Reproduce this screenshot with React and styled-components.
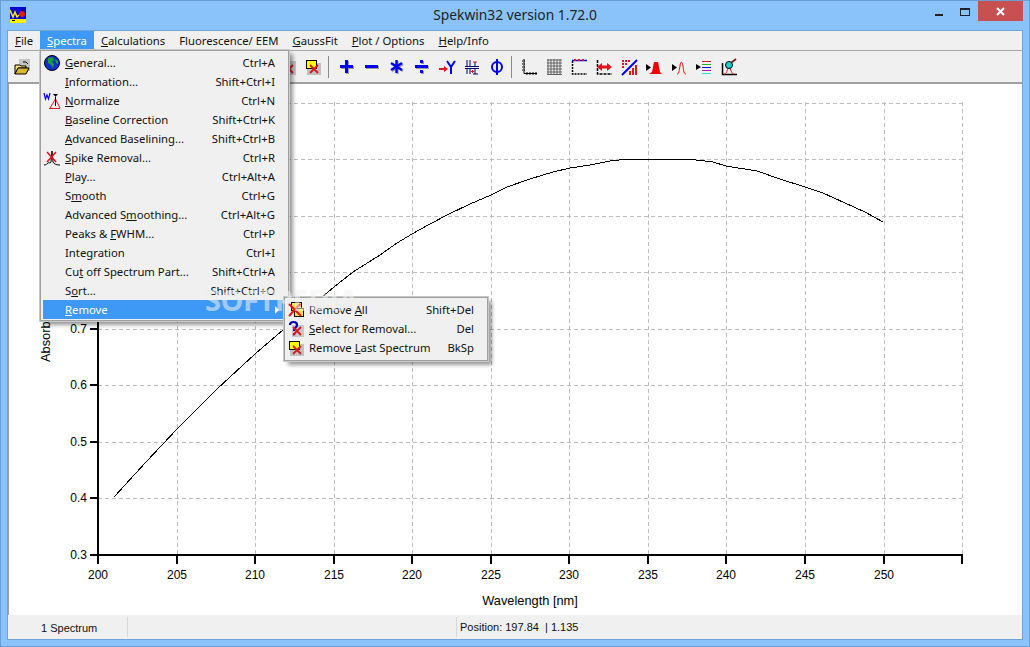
import React from "react";
import styled, { createGlobalStyle } from "styled-components";

const UI_FONT = `"Noto Sans", "Liberation Sans", sans-serif`;
const PLOT_FONT = `"Liberation Sans", Arial, sans-serif`;

const GlobalStyle = createGlobalStyle`
  html, body {
    margin: 0;
    padding: 0;
    background: #8ac3f9;
  }
  u {
    text-underline-offset: 1px;
  }
`;

const menuBarItems = [
  "_File",
  "_Spectra",
  "_Calculations",
  "Fluorescence/ EEM",
  "_GaussFit",
  "_Plot / Options",
  "_Help/Info"
];

const spectraMenu = [
  { label: "_General...", keys: "Ctrl+A", icon: "globe" },
  { label: "_Information...", keys: "Shift+Ctrl+I" },
  { label: "_Normalize", keys: "Ctrl+N", icon: "normalize" },
  { label: "_Baseline Correction", keys: "Shift+Ctrl+K" },
  { label: "_Advanced Baselining...", keys: "Shift+Ctrl+B" },
  { label: "_Spike Removal...", keys: "Ctrl+R", icon: "spike" },
  { label: "_Play...", keys: "Ctrl+Alt+A" },
  { label: "S_mooth", keys: "Ctrl+G" },
  { label: "Advanced S_moothing...", keys: "Ctrl+Alt+G" },
  { label: "Peaks & _FWHM...", keys: "Ctrl+P" },
  { label: "Inte_gration", keys: "Ctrl+I" },
  { label: "Cu_t off Spectrum Part...", keys: "Shift+Ctrl+A" },
  { label: "S_ort...", keys: "Shift+Ctrl+O" },
  { label: "_Remove", submenu: true }
];

const removeMenu = [
  { label: "Remove _All", keys: "Shift+Del", icon: "removeAll" },
  { label: "_Select for Removal...", keys: "Del", icon: "removeSelect" },
  { label: "Remove _Last Spectrum", keys: "BkSp", icon: "removeLast" }
];

// pixel positions read off the plot, 1 nm steps are too fine to matter here
const curve = [
  [114, 497], [146, 462], [178, 428], [217, 389], [255, 354], [283, 330],
  [322, 297], [334, 287], [353, 272], [380, 255], [397, 243], [412, 234],
  [430, 224], [447, 215], [470, 204], [491, 195], [507, 187], [530, 179],
  [553, 172], [570, 168], [590, 165], [610, 161], [628, 159], [688, 159],
  [713, 162], [726, 166], [757, 171], [780, 179], [805, 187], [823, 193],
  [845, 203], [865, 212], [883, 222]
];

const xTicks = [200, 205, 210, 215, 220, 225, 230, 235, 240, 245, 250, 255];
const yTicks = [0.3, 0.4, 0.5, 0.6, 0.7, 0.8, 0.9, 1.0, 1.1];
const xPos = nm => Math.round(98 + (nm - 200) * 15.71);
const yPos = a => Math.round(555 - (a - 0.3) * 565.5);

const AccessLabel = ({ text }) => {
  if (!text.includes("_")) return text;
  const [before, after] = text.split("_");
  return (
    <>
      {before}
      <u>{after[0]}</u>
      {after.slice(1)}
    </>
  );
};

const Shadowed = ({ children }) => (
  <>
    <g fill="#9a9a9a" stroke="#9a9a9a" transform="translate(1 1)">
      {children}
    </g>
    <g fill="#0000ee" stroke="#0000ee">
      {children}
    </g>
  </>
);

const RedX = () => (
  <path d="M5 6l8 8M13 6l-8 8" stroke="#d8181c" strokeWidth="1.8" fill="none" />
);

const icons = {
  open: (
    <>
      <rect x="5" y="0" width="11" height="12" fill="#c4c4c4" />
      <path d="M1 6h5l1 1h5v2H4l-3 6z" fill="#f8e860" stroke="#000" />
      <path d="M1 15l3-6h11l-3 6z" fill="#d8b830" stroke="#000" />
      <path d="M9 3h3l2 2" fill="none" stroke="#000" />
    </>
  ),
  xPart: (
    <>
      <rect x="0" y="2" width="16" height="14" fill="#c4c4c4" />
      <RedX />
    </>
  ),
  last: (
    <>
      <rect x="2" y="4" width="14" height="12" fill="#c0c0c0" />
      <rect x="1.5" y="1.5" width="10" height="8" fill="#ffff00" stroke="#000" />
      <RedX />
    </>
  ),
  plus: (
    <Shadowed>
      <rect x="1" y="6" width="13" height="3" strokeWidth="0" />
      <rect x="6" y="1" width="3" height="13" strokeWidth="0" />
    </Shadowed>
  ),
  minus: (
    <Shadowed>
      <rect x="1" y="6" width="13" height="3" strokeWidth="0" />
    </Shadowed>
  ),
  times: (
    <Shadowed>
      <path d="M7.5 1v13M2 4l11 7M13 4L2 11" strokeWidth="2.4" fill="none" />
    </Shadowed>
  ),
  divide: (
    <Shadowed>
      <rect x="1" y="6" width="13" height="3" strokeWidth="0" />
      <rect x="6" y="1" width="3" height="3" strokeWidth="0" />
      <rect x="6" y="11" width="3" height="3" strokeWidth="0" />
    </Shadowed>
  ),
  fork: (
    <>
      <path d="M0 10h6" stroke="#e8141c" strokeWidth="2" />
      <path d="M5 7l4 3-4 3z" fill="#e8141c" />
      <path d="M8 2l4 6 4-6M12 8v7" stroke="#0000ee" strokeWidth="2" fill="none" />
    </>
  ),
  levels: (
    <>
      <path d="M3 1v6M6 1v6M1 7.5h14M11 3v4" stroke="#000066" strokeWidth="1" fill="none" />
      <path d="M9 3h4" stroke="#e8141c" />
      <path d="M1 9.5h14M3 10v5M6 10v5M11 10v5M9 15h5" stroke="#000066" fill="none" />
      <path d="M7 12.5h3M8.5 11v3" stroke="#e8141c" />
    </>
  ),
  phi: (
    <>
      <circle cx="8" cy="8" r="5" fill="none" stroke="#0000ee" strokeWidth="2" />
      <path d="M8 0v16" stroke="#0000ee" strokeWidth="2" />
    </>
  ),
  axes: (
    <>
      <path d="M3 0v14.5H16" stroke="#000" fill="none" />
      <path d="M1 2h4M1 5h4M1 8h4M1 11h4M6 13v3M9 13v3M12 13v3M15 13v3" stroke="#000" strokeDasharray="1 1" />
    </>
  ),
  grid: (
    <g stroke="#606060">
      <path d="M1 1h15M1 4h15M1 7h15M1 10h15M1 13h15M1 15.5h15" />
      <path d="M2 0v16M5 0v16M8 0v16M11 0v16M14 0v16" />
    </g>
  ),
  frame: (
    <>
      <path d="M1.5 2v13H16" stroke="#000" fill="none" strokeWidth="1.5" strokeDasharray="2 1" />
      <path d="M1 1.5h15" stroke="#0000ee" strokeWidth="1.5" />
      <path d="M3 1h2M7 1h2M11 1h2" stroke="#e8141c" strokeWidth="2" />
    </>
  ),
  stretch: (
    <>
      <path d="M1.5 1v14H16" stroke="#000" fill="none" strokeWidth="1.5" strokeDasharray="3 1" />
      <path d="M3 8h11" stroke="#e8141c" strokeWidth="3" />
      <path d="M6 4L1 8l5 4zM11 4l5 4-5 4z" fill="#e8141c" />
    </>
  ),
  diagonal: (
    <>
      <path
        d="M1 1h2v2H1zM4 1h2v2H4zM7 1h2v2H7zM1 4h2v2H1zM4 4h2v2H4zM1 7h2v2H1zM8 12h2v4H8zM11 9h2v7h-2zM14 6h2v10h-2z"
        fill="#e8141c"
      />
      <path d="M1 16L16 1" stroke="#0000ee" strokeWidth="2" />
    </>
  ),
  peakFill: (
    <>
      <path d="M0 5l5 3.5L0 12z" fill="#000" />
      <path d="M3 15l3-2 2-10h4l2 10 2 2z" fill="#f00000" />
    </>
  ),
  peakLine: (
    <>
      <path d="M1 5l5 3.5L1 12z" fill="#000" />
      <path d="M6 15c2 0 2-3 3-8 .5-5 2-5 3 0 .5 5 1 8 3 8" fill="none" stroke="#f00000" />
    </>
  ),
  legend: (
    <>
      <path d="M0 5l5 3-5 3z" fill="#000" />
      <path d="M6 2.5h9" stroke="#e8141c" />
      <path d="M6 5.5h9" stroke="#10c010" />
      <path d="M6 8.5h9" stroke="#0000ee" />
      <path d="M6 11.5h9" stroke="#c010c0" />
      <path d="M6 14.5h9" stroke="#10e8e8" />
    </>
  ),
  zoomPeak: (
    <>
      <path d="M1.5 4v11.5H16" stroke="#000" strokeWidth="1.5" fill="none" />
      <path d="M3 15c2 0 3-2 4-6M9 9c1 3 2 6 4 6" stroke="#e8141c" fill="none" />
      <circle cx="8" cy="6" r="3.5" fill="#20d0d0" stroke="#000" />
      <path d="M10.5 3.5L15 0" stroke="#802020" strokeWidth="2" />
    </>
  ),
  globe: (
    <>
      <circle cx="8" cy="8" r="7.5" fill="#1030d0" stroke="#000" />
      <path d="M4 3l5-1 1 3-2 2 2 2-1 4-2-3-3-2zM11 4l3 2v3l-2-1z" fill="#18a030" />
    </>
  ),
  normalize: (
    <>
      <path d="M0 0l1.5 6L3 2l1.5 4L6 0" stroke="#0000ee" strokeWidth="1.2" fill="none" />
      <path d="M9 1h5l-2.5 3z" fill="#000" />
      <path d="M6 15L11.5 6 16 15" stroke="#e8141c" fill="none" />
      <path d="M5 15.5h11" stroke="#e8141c" />
      <path d="M11.5 4v9" stroke="#000" />
    </>
  ),
  spike: (
    <>
      <path d="M0 15c2 0 3-1 4-2s2 1 3-1l1-11 1 11c1 2 3 3 7 3" stroke="#000" fill="none" />
      <path d="M3 2l9 10M12 2L3 12" stroke="#e8141c" strokeWidth="1.6" />
    </>
  ),
  removeAll: (
    <>
      <rect x="3.5" y="0.5" width="10" height="8" fill="#f8e048" stroke="#000" />
      <rect x="6.5" y="6.5" width="9" height="8" fill="#f8e048" stroke="#000" />
      <path d="M1 2l12 12M12 2L1 14" stroke="#e8141c" strokeWidth="2" />
    </>
  ),
  removeSelect: (
    <>
      <rect x="4" y="4" width="12" height="12" fill="#c8c8c8" />
      <path d="M2 4c0-4 7-4 7 0 0 3-3 2-3 6" stroke="#0000b0" strokeWidth="2.2" fill="none" />
      <rect x="5" y="12" width="2.2" height="2.2" fill="#0000b0" />
      <RedX />
    </>
  )
};
icons.removeLast = icons.last;

const Icon = ({ name }) => (
  <IconSvg viewBox="0 0 16 16">{icons[name]}</IconSvg>
);

const MenuRow = ({ item, active }) => (
  <Row $active={active}>
    <RowIcon>{item.icon && <Icon name={item.icon} />}</RowIcon>
    <RowLabel>
      <AccessLabel text={item.label} />
    </RowLabel>
    {item.keys && <span>{item.keys}</span>}
    {item.submenu && <Arrow />}
  </Row>
);

const Plot = () => (
  <PlotSvg viewBox="9 84 1013 531" shapeRendering="crispEdges">
    <g stroke="#bdbdbd" strokeDasharray="4 3">
      {xTicks.slice(1).map(nm => (
        <line key={nm} x1={xPos(nm) + 0.5} x2={xPos(nm) + 0.5} y1="102" y2="555" />
      ))}
      {yTicks.slice(1).map(a => (
        <line key={a} x1="98" x2="962" y1={yPos(a) + 0.5} y2={yPos(a) + 0.5} />
      ))}
    </g>
    <polyline
      points={curve.map(p => p.join(",")).join(" ")}
      fill="none"
      stroke="#000"
    />
    <g stroke="#000" strokeWidth="2">
      <line x1="98" x2="98" y1="102" y2="564" />
      <line x1="90" x2="963" y1="555" y2="555" />
      {xTicks.map(nm => (
        <line key={nm} x1={xPos(nm)} x2={xPos(nm)} y1="555" y2="564" />
      ))}
      {yTicks.map(a => (
        <line key={a} x1="90" x2="98" y1={yPos(a)} y2={yPos(a)} />
      ))}
    </g>
    <AxisText textAnchor="middle">
      {xTicks.slice(0, 11).map(nm => (
        <text key={nm} x={xPos(nm)} y="579">
          {nm}
        </text>
      ))}
    </AxisText>
    <AxisText textAnchor="end">
      {yTicks.map(a => (
        <text key={a} x="87" y={yPos(a) + 4}>
          {a.toFixed(1)}
        </text>
      ))}
    </AxisText>
    <AxisTitle x="530" y="605" textAnchor="middle">
      Wavelength [nm]
    </AxisTitle>
    <AxisTitle x="50" y="362" transform="rotate(-90 50 362)">
      Absorbance
    </AxisTitle>
  </PlotSvg>
);

export default function App() {
  return (
    <Window>
      <GlobalStyle />
      <TitleBar>
        <AppIcon viewBox="0 0 16 16">
          <rect width="16" height="16" fill="#0000d8" />
          <rect y="12" width="16" height="4" fill="#f8f000" />
          <rect x="2" y="13" width="3" height="1" fill="#000" />
          <path d="M0 3l3 7 2-5 2 5 2-2" stroke="#f8f000" strokeWidth="1.5" fill="none" />
          <circle cx="12" cy="7" r="3" fill="#e01818" />
          <path d="M12 4l2-3" stroke="#301010" />
        </AppIcon>
        <Title>Spekwin32 version 1.72.0</Title>
        <Controls>
          <CaptionButton>
            <MinGlyph />
          </CaptionButton>
          <CaptionButton>
            <MaxGlyph />
          </CaptionButton>
          <CloseButton>
            <svg width="9" height="9" viewBox="0 0 9 9">
              <path d="M1 1l7 7M8 1L1 8" stroke="#fff" strokeWidth="2" />
            </svg>
          </CloseButton>
        </Controls>
      </TitleBar>
      <Client>
        <MenuBar>
          {menuBarItems.map(item => (
            <MenuBarItem key={item} $open={item === "_Spectra"}>
              <AccessLabel text={item} />
            </MenuBarItem>
          ))}
        </MenuBar>
        <Toolbar>
          <ToolIcon name="open" />
          <HiddenRun />
          <ToolIcon name="xPart" />
          <ToolIcon name="last" />
          <Separator />
          <ToolIcon name="plus" />
          <ToolIcon name="minus" />
          <ToolIcon name="times" />
          <ToolIcon name="divide" />
          <ToolIcon name="fork" />
          <ToolIcon name="levels" />
          <ToolIcon name="phi" />
          <Separator $tight />
          <ToolIcon name="axes" />
          <ToolIcon name="grid" />
          <ToolIcon name="frame" />
          <ToolIcon name="stretch" />
          <ToolIcon name="diagonal" />
          <ToolIcon name="peakFill" />
          <ToolIcon name="peakLine" />
          <ToolIcon name="legend" />
          <ToolIcon name="zoomPeak" />
        </Toolbar>
        <PlotPane>
          <Plot />
        </PlotPane>
        <StatusBar>
          <StatusCount>1 Spectrum</StatusCount>
          <StatusGap />
          <StatusPosition>Position: 197.84&nbsp; | 1.135</StatusPosition>
        </StatusBar>
      </Client>

      <SpectraMenu>
        {spectraMenu.map(item => (
          <MenuRow key={item.label} item={item} active={item.submenu} />
        ))}
      </SpectraMenu>
      <RemoveMenu>
        {removeMenu.map(item => (
          <MenuRow key={item.label} item={item} />
        ))}
      </RemoveMenu>
      <Watermark>SOFTPEDIA</Watermark>
    </Window>
  );
}

const ToolIcon = ({ name }) => (
  <ToolSlot>
    <Icon name={name} />
  </ToolSlot>
);

const Window = styled.div`
  position: relative;
  box-sizing: border-box;
  width: 1030px;
  height: 647px;
  display: flex;
  flex-direction: column;
  padding: 0 6px 6px;
  background: #8ac3f9;
  border: 1px solid #6a9fd6;
  overflow: hidden;
  font-family: ${UI_FONT};
  font-size: 11.3px;
  color: #111;
`;

const TitleBar = styled.div`
  height: 29px;
  flex: none;
  display: grid;
  grid-template-columns: 1fr auto 1fr;
`;

const AppIcon = styled.svg`
  width: 16px;
  height: 16px;
  margin: 6px 0 0 3px;
`;

const Title = styled.div`
  padding-top: 5px;
  font-size: 13.8px;
  line-height: 18px;
  color: #222;
`;

const Controls = styled.div`
  display: flex;
  justify-content: flex-end;
  align-items: flex-start;
`;

const CaptionButton = styled.div`
  width: 26px;
  height: 20px;
  display: flex;
  align-items: center;
  justify-content: center;
`;

const MinGlyph = styled.div`
  width: 8px;
  height: 2px;
  margin-top: 7px;
  background: #222;
`;

const MaxGlyph = styled.div`
  box-sizing: border-box;
  width: 10px;
  height: 8px;
  margin-top: 2px;
  border: 1px solid #222;
  border-top-width: 2px;
`;

const CloseButton = styled.div`
  width: 45px;
  height: 20px;
  display: flex;
  align-items: center;
  justify-content: center;
  background: #c75050;
`;

const Client = styled.div`
  flex: 1;
  min-height: 0;
  display: flex;
  flex-direction: column;
  background: #f0f0f0;
  border: 1px solid #6fa5da;
`;

const MenuBar = styled.div`
  height: 19px;
  flex: none;
  display: flex;
`;

const MenuBarItem = styled.div`
  padding: 0 7px;
  line-height: 19px;
  white-space: nowrap;
  color: ${p => (p.$open ? "#fff" : "#111")};
  background: ${p => (p.$open ? "#3d99f5" : "transparent")};
`;

const Toolbar = styled.div`
  height: 34px;
  box-sizing: border-box;
  flex: none;
  display: flex;
  align-items: center;
  gap: 9px;
  padding: 0 0 0 6px;
  border-top: 1px solid #a8a8a8;
  border-bottom: 2px solid #a0a0a0;
`;

const ToolSlot = styled.div`
  width: 16px;
  height: 16px;
  flex: none;
`;

const IconSvg = styled.svg`
  display: block;
  width: 16px;
  height: 16px;
  overflow: visible;
`;

const HiddenRun = styled.div`
  width: 232px;
  flex: none;
`;

const Separator = styled.div`
  width: 1px;
  height: 22px;
  margin: ${p => (p.$tight ? "0 0 0 -3px" : "0 1px 0 -2px")};
  background: #8c8c8c;
`;

const PlotPane = styled.div`
  flex: 1;
  min-height: 0;
  background: #fff;
  border-left: 1px solid #a0a0a0;
`;

const PlotSvg = styled.svg`
  display: block;
  width: 1013px;
  height: 531px;
`;

const AxisText = styled.g`
  font-family: ${PLOT_FONT};
  font-size: 12px;
  fill: #000;
`;

const AxisTitle = styled.text`
  font-family: ${PLOT_FONT};
  font-size: 12.8px;
  fill: #000;
`;

const StatusBar = styled.div`
  height: 24px;
  flex: none;
  display: flex;
  font-family: ${PLOT_FONT};
  font-size: 11px;
  line-height: 24px;
`;

const StatusCount = styled.div`
  width: 120px;
  box-sizing: border-box;
  padding-left: 33px;
  border-right: 1px solid #d8d8d8;
  margin: 2px 0;
  line-height: 22px;
`;

const StatusGap = styled.div`
  width: 328px;
  border-right: 1px solid #d8d8d8;
  margin: 2px 0;
`;

const StatusPosition = styled.div`
  padding-left: 3px;
  white-space: nowrap;
`;

const Popup = styled.div`
  position: absolute;
  box-sizing: border-box;
  display: flex;
  flex-direction: column;
  padding: 2px;
  background: #f0f0f0;
  border: 1px solid #a0a0a0;
  box-shadow: 0 0 0 1px #c8c8c8, 4px 4px 4px rgba(0, 0, 0, 0.4);
`;

const SpectraMenu = styled(Popup)`
  left: 39px;
  top: 49px;
  width: 249px;
  height: 271px;
`;

const RemoveMenu = styled(Popup)`
  left: 283px;
  top: 296px;
  width: 204px;
  height: 64px;
`;

const Row = styled.div`
  height: 19px;
  flex: none;
  display: flex;
  align-items: center;
  padding-right: 11px;
  white-space: nowrap;
  color: ${p => (p.$active ? "#fff" : "#111")};
  background: ${p => (p.$active ? "#3d99f5" : "transparent")};
`;

const RowIcon = styled.div`
  width: 22px;
  height: 16px;
  flex: none;
  padding-left: 1px;
  box-sizing: border-box;
`;

const RowLabel = styled.div`
  flex: 1;
`;

const Arrow = styled.div`
  width: 0;
  height: 0;
  margin-right: -4px;
  border-left: 4px solid #fff;
  border-top: 4px solid transparent;
  border-bottom: 4px solid transparent;
`;

const Watermark = styled.div`
  position: absolute;
  left: 204px;
  top: 283px;
  font-family: "Open Sans", ${PLOT_FONT};
  font-weight: 700;
  font-size: 29px;
  line-height: 32px;
  letter-spacing: -0.5px;
  color: rgba(255, 255, 255, 0.5);
  text-shadow: 0 0 1px rgba(120, 120, 120, 0.12);
  pointer-events: none;
`;
